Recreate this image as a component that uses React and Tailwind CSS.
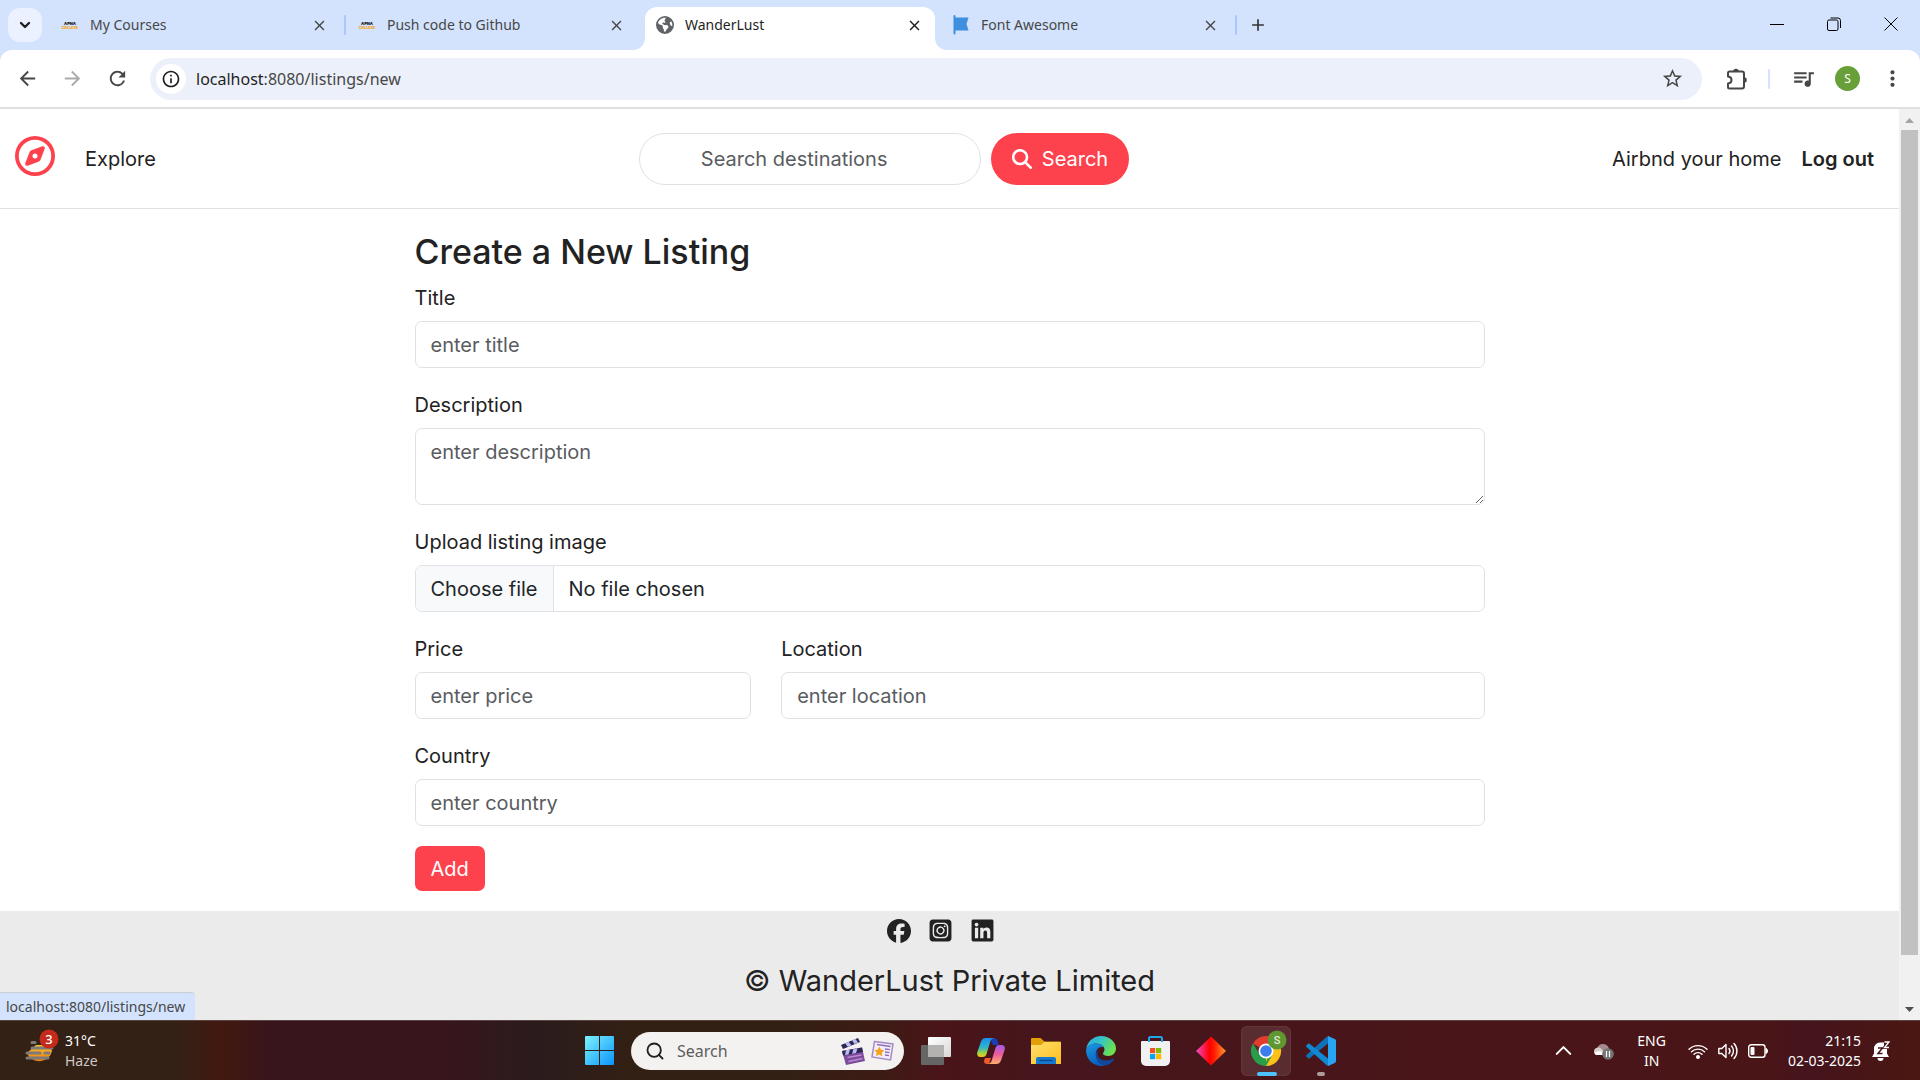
import React from "react";
import {
  FaRegCompass,
  FaMagnifyingGlass,
  FaFacebook,
  FaSquareInstagram,
  FaLinkedin,
  FaEarthAmericas,
} from "react-icons/fa6";
import {
  MdArrowBack,
  MdArrowForward,
  MdRefresh,
  MdInfoOutline,
  MdStarBorder,
  MdQueueMusic,
  MdMoreVert,
  MdClose,
  MdAdd,
} from "react-icons/md";
import { ChevronDown, ChevronUp, Search } from "lucide-react";

const uiFont = "font-['Noto_Sans',sans-serif]";
const pageFont = "font-['Inter',sans-serif]";

function CollegeIcon() {
  return (
    <svg viewBox="0 0 18 11" className="h-[11px] w-[18px] shrink-0 overflow-visible" aria-hidden="true">
      <text x="9" y="5" textAnchor="middle" fontSize="4" fontWeight="900" fontFamily="Inter" fill="#1b1b1b">
        APNA
      </text>
      <text x="9" y="9.200" textAnchor="middle" fontSize="3.600" fontWeight="900" fontFamily="Inter" fill="#f5a623">
        COLLEGE
      </text>
    </svg>
  );
}

function FlagIcon() {
  return (
    <svg viewBox="0 0 18 20" className="h-5 w-[18px] shrink-0" aria-hidden="true">
      <path d="M2.500 1v17.500" stroke="#3f8fdf" strokeWidth="2" strokeLinecap="round" />
      <path d="M2 2.500h14.500L14.500 9l2 6.500H2z" fill="#3f8fdf" />
    </svg>
  );
}

function ExtensionIcon() {
  return (
    <svg viewBox="0 0 22 24" className="h-6 w-[22px]" aria-hidden="true">
      <path
        d="M3.500 4.500h12.500a2 2 0 0 1 2 2v13a2 2 0 0 1-2 2H3.500a1.500 1.500 0 0 1-1.500-1.500v-3.500c2.200-.2 3.500-1.600 3.500-3.500S4.200 9.700 2 9.500V6a1.500 1.500 0 0 1 1.500-1.500z"
        fill="none"
        stroke="currentColor"
        strokeWidth="2"
        strokeLinejoin="round"
      />
      <path d="M7.200 4.500a2.800 2.800 0 0 1 5.600 0zM18 10.200a2.800 2.800 0 0 1 0 5.600z" fill="currentColor" />
    </svg>
  );
}

function Tab({ icon, title, active, separator }) {
  if (active) {
    return (
      <div className="w-[297px] min-w-0 pl-0.5 pr-[5px] pt-[7px]">
        <div className="relative flex h-[43px] items-center rounded-t-xl bg-white pb-[7px] pl-[11px] pr-3 before:absolute before:bottom-0 before:-left-3 before:size-3 before:rounded-br-xl before:shadow-[6px_6px_0_6px_white] after:absolute after:-right-3 after:bottom-0 after:size-3 after:rounded-bl-xl after:shadow-[-6px_6px_0_6px_white]">
          {icon}
          <span className="ml-[11px] flex-1 truncate text-sm text-[#1f1f1f]">{title}</span>
          <button aria-label={"Close " + title} className="text-[#1f1f1f]">
            <MdClose size={17} />
          </button>
        </div>
      </div>
    );
  }
  return (
    <div className="flex w-[297px] min-w-0 items-center pl-3">
      {icon}
      <span className="ml-[11px] flex-1 truncate text-sm text-[#474747]">{title}</span>
      <button aria-label={"Close " + title} className="text-[#474747]">
        <MdClose size={17} />
      </button>
      <span className={separator ? "ml-4 h-5 w-0.5 rounded bg-[#a8c7fa]" : "ml-4 h-5 w-0.5"} />
    </div>
  );
}

function TabStrip() {
  return (
    <header className="flex h-[50px] bg-[#d3e3fd]">
      <button
        aria-label="Search tabs"
        className="ml-2 mr-[7px] mt-2 flex size-[34px] shrink-0 items-center justify-center rounded-xl bg-[#ebf1fe] text-[#1f1f1f]"
      >
        <ChevronDown size={16} strokeWidth={3.5} />
      </button>
      <Tab icon={<CollegeIcon />} title="My Courses" separator />
      <Tab icon={<CollegeIcon />} title="Push code to Github" />
      <Tab icon={<FaEarthAmericas size={18} className="shrink-0 text-[#5f6368]" />} title="WanderLust" active />
      <Tab icon={<FlagIcon />} title="Font Awesome" separator />
      <button aria-label="New tab" className="ml-[11px] self-center text-[#333333]">
        <MdAdd size={20} />
      </button>
      <div className="ml-auto flex items-center gap-[43px] pb-0.5 pr-[22px] text-black">
        <button aria-label="Minimize">
          <svg viewBox="0 0 14 14" className="size-3.5">
            <path d="M0 7.500h14" stroke="currentColor" strokeWidth="1" />
          </svg>
        </button>
        <button aria-label="Restore">
          <svg viewBox="0 0 14 14" className="size-3.5" fill="none" stroke="currentColor">
            <rect x="0.500" y="3" width="10.500" height="10.500" rx="1.500" />
            <path d="M3.500 1h7.500a2.500 2.500 0 0 1 2.500 2.500v7.500" />
          </svg>
        </button>
        <button aria-label="Close window">
          <svg viewBox="0 0 14 14" className="size-3.5" stroke="currentColor">
            <path d="M0.500 0.500l13 13M13.500 0.500l-13 13" />
          </svg>
        </button>
      </div>
    </header>
  );
}

function Toolbar() {
  return (
    <div className="bg-[#d3e3fd]">
      <div className="relative flex h-[59px] items-center rounded-t-xl border-b-2 border-[#e0e0e0] bg-white pl-4 pr-[15px] text-[#474747]">
        <button aria-label="Back">
          <MdArrowBack size={23} />
        </button>
        <button aria-label="Forward" className="ml-[22px] text-[#ababab]">
          <MdArrowForward size={23} />
        </button>
        <button aria-label="Reload" className="ml-[22px]">
          <MdRefresh size={23} />
        </button>
        <div className="ml-[21px] flex h-[42px] flex-1 items-center rounded-full bg-[#ecf0fa] pl-1.5 pr-[18px]">
          <button
            aria-label="Site information"
            className="flex size-[30px] items-center justify-center rounded-full bg-white text-[#1f1f1f]"
          >
            <MdInfoOutline size={20} />
          </button>
          <p className="ml-[10px] flex-1 text-base text-[#474747]">
            <span className="text-[#1f1f1f]">localhost</span>:8080/listings/new
          </p>
          <button aria-label="Bookmark this tab">
            <MdStarBorder size={23} />
          </button>
        </div>
        <button aria-label="Extensions" className="ml-6">
          <ExtensionIcon />
        </button>
        <span className="ml-5 h-5 w-0.5 rounded bg-[#d3e3fd]" />
        <button aria-label="Media controls" className="ml-[21px]">
          <MdQueueMusic size={25} />
        </button>
        <button
          aria-label="Profile"
          className="ml-[19px] flex size-[25px] items-center justify-center rounded-full bg-[#689f38] text-xs text-white"
        >
          S
        </button>
        <button aria-label="Menu" className="ml-5">
          <MdMoreVert size={25} />
        </button>
      </div>
    </div>
  );
}

function Navbar() {
  return (
    <nav className="flex h-[100px] items-center justify-between border-b border-[#dee2e6] pl-[15px] pr-[25px] text-xl text-[#222222]">
      <div className="flex items-center gap-[30px]">
        <a href="#home" aria-label="WanderLust home" className="pb-1.5 text-[#fe424d]">
          <FaRegCompass size={40} />
        </a>
        <a href="#explore">Explore</a>
      </div>
      <form className="flex items-center gap-[10px]" onSubmit={(e) => e.preventDefault()}>
        <input
          type="search"
          aria-label="Search destinations"
          placeholder="Search destinations"
          className="h-[52px] w-[342px] rounded-full border border-[#dee2e6] bg-white pl-[61px] pr-5 placeholder:text-[#595c5f] placeholder:opacity-100"
        />
        <button className="flex h-[52px] items-center gap-[10px] rounded-full bg-[#fe424d] px-[21px] text-white">
          <FaMagnifyingGlass size={20} />
          Search
        </button>
      </form>
      <div className="flex items-center gap-5">
        <a href="#airbnb">Airbnd your home</a>
        <a href="#logout" className="font-semibold">
          Log out
        </a>
      </div>
    </nav>
  );
}

const control =
  "block w-full rounded-[7px] border border-[#dee2e6] bg-white px-[15px] text-xl leading-[30px] text-[#212529] placeholder:text-[#595c5f] placeholder:opacity-100";

function Field({ id, label, className, children }) {
  return (
    <div className={className}>
      <label htmlFor={id} className="mb-2 block pt-0.5 text-xl leading-[30px]">
        {label}
      </label>
      {children}
    </div>
  );
}

function ListingForm() {
  return (
    <main className="mx-auto w-full max-w-[1070px] py-5 text-[#222222]">
      <h1 className="mb-2 pt-0.5 text-[34px] font-medium leading-[42px]">Create a New Listing</h1>
      <form className="flex flex-col gap-5" onSubmit={(e) => e.preventDefault()}>
        <Field id="title" label="Title">
          <input id="title" placeholder="enter title" className={control + " h-[47px]"} />
        </Field>
        <Field id="description" label="Description">
          <textarea id="description" placeholder="enter description" className={control + " h-[77px] py-2"} />
        </Field>
        <Field id="image" label="Upload listing image">
          <input id="image" type="file" className="sr-only" />
          <label
            htmlFor="image"
            className="flex h-[47px] items-stretch overflow-hidden rounded-[7px] border border-[#dee2e6] bg-white text-xl text-[#212529]"
          >
            <span className="flex items-center border-r border-[#dee2e6] bg-[#f8f9fa] px-[15px]">Choose file</span>
            <span className="flex items-center px-[15px]">No file chosen</span>
          </label>
        </Field>
        <div className="grid grid-cols-3 gap-[30px]">
          <Field id="price" label="Price">
            <input id="price" placeholder="enter price" className={control + " h-[47px]"} />
          </Field>
          <Field id="location" label="Location" className="col-span-2">
            <input id="location" placeholder="enter location" className={control + " h-[47px]"} />
          </Field>
        </div>
        <Field id="country" label="Country">
          <input id="country" placeholder="enter country" className={control + " h-[47px]"} />
        </Field>
        <button className="h-[45px] self-start rounded-[7px] bg-[#fe424d] px-4 text-xl text-white">Add</button>
      </form>
    </main>
  );
}

function Footer() {
  return (
    <footer className="flex-1 bg-[#ebebeb] pt-[7px] text-[#222222]">
      <div className="flex items-center justify-center gap-[17px] pr-[18px]">
        <a href="#facebook" aria-label="Facebook">
          <FaFacebook size={24} />
        </a>
        <a href="#instagram" aria-label="Instagram">
          <FaSquareInstagram size={25} />
        </a>
        <a href="#linkedin" aria-label="LinkedIn">
          <FaLinkedin size={25} />
        </a>
      </div>
      <p className="mt-4 text-center text-[29px] leading-[44px]">© WanderLust Private Limited</p>
    </footer>
  );
}

function Scrollbar() {
  return (
    <div className="flex w-[21px] shrink-0 flex-col items-center bg-[#f1f1f1]" aria-hidden="true">
      <svg viewBox="0 0 21 21" className="size-[21px]">
        <path d="M6 14h9l-4.500-5z" fill="#a3a3a3" />
      </svg>
      <div className="w-[17px] flex-[825] bg-[#c1c1c1]" />
      <div className="flex-[44]" />
      <svg viewBox="0 0 21 21" className="size-[21px]">
        <path d="M6 8h9l-4.500 5z" fill="#505050" />
      </svg>
    </div>
  );
}

function WeatherIcon() {
  return (
    <svg viewBox="0 -6 36 44" className="h-11 w-9" aria-hidden="true">
      <defs>
        <linearGradient id="sun" x1="0" y1="0" x2="0" y2="1">
          <stop offset="0" stopColor="#f9c22e" />
          <stop offset="1" stopColor="#ee7a12" />
        </linearGradient>
      </defs>
      <path d="M3 18a13 12.500 0 0 0 25 -2l-2-6H12z" fill="url(#sun)" />
      <g stroke="#7d7a78" strokeWidth="3" strokeLinecap="round">
        <path d="M8 7.500h3M8 13h20M3 18h13M21 18h4M3 23h21" />
      </g>
      <circle cx="25" cy="4" r="9.500" fill="#c42b1c" />
      <text x="25" y="8.500" textAnchor="middle" fontSize="13" fontFamily="Noto Sans" fontWeight="500" fill="#fff">
        3
      </text>
    </svg>
  );
}

function WindowsLogo() {
  return (
    <svg viewBox="0 0 29 29" className="size-[29px]">
      <defs>
        <linearGradient id="win" x1="0" y1="0" x2="1" y2="1">
          <stop offset="0" stopColor="#7df3fd" />
          <stop offset="1" stopColor="#0a94fb" />
        </linearGradient>
      </defs>
      <path d="M1 0h13v14H0V1a1 1 0 0 1 1-1zM15 0h13a1 1 0 0 1 1 1v13H15zM0 15h14v14H1a1 1 0 0 1-1-1zM15 15h14v13a1 1 0 0 1-1 1H15z" fill="url(#win)" />
    </svg>
  );
}

function ClapperIcon() {
  return (
    <svg viewBox="0 0 26 28" className="h-7 w-[26px]" aria-hidden="true">
      <path d="M1 8L18 1l2 4L3 12z" fill="#2e2754" />
      <path d="M5 6.300l3.500-1.500 3 3.500L8 10zM12 3.500l3.500-1.400L18 5.600l-3.500 1.500z" fill="#b9bdf3" />
      <path d="M2 14l20-3.500L25 24 6 28z" fill="#7e4a9c" />
      <path d="M2 14l20-3.500 1 4.500-20 3.500z" fill="#2e2754" />
      <path d="M6 13.300l4-.7-1.500 4.800-3.500.6zM13.500 12l4-.7-1.500 4.800-4 .7z" fill="#b9bdf3" />
      <path d="M7.500 20.500l14-2.500M8.500 24.500l14-3" stroke="#b98bd0" strokeWidth="1.300" />
    </svg>
  );
}

function NewsIcon() {
  return (
    <svg viewBox="0 0 24 22" className="h-[22px] w-6" aria-hidden="true">
      <path d="M3.500 1.500l18.500 2.500-2.500 16L1 17z" fill="#f3ecfb" stroke="#a58bc6" strokeWidth="1.500" />
      <path d="M6 4.500l13.500 2M14 9l5 .7M14 12l4.500.7M14 15l4 .6" stroke="#8d6fb5" strokeWidth="1.300" />
      <path d="M8.500 6.500l1.400 3.200 3.500.5-2.600 2.400.5 3.600-3.200-1.700-3.200 1.500.8-3.500-2.300-2.600 3.400-.2z" fill="#f6a313" />
    </svg>
  );
}

function TaskViewIcon() {
  return (
    <svg viewBox="0 0 30 28" className="h-7 w-[30px]">
      <defs>
        <linearGradient id="tvw" x1="0" y1="0" x2="1" y2="1">
          <stop offset="0" stopColor="#ffffff" />
          <stop offset="1" stopColor="#d8d8d8" />
        </linearGradient>
      </defs>
      <rect x="0" y="8" width="23" height="20" rx="1" fill="#666666" />
      <rect x="7" y="0" width="23" height="20" rx="1" fill="url(#tvw)" />
      <rect x="7" y="8" width="16" height="12" fill="#b4b1b1" />
    </svg>
  );
}

function CopilotIcon() {
  return (
    <svg viewBox="0 0 28 26" className="h-[26px] w-7">
      <defs>
        <linearGradient id="cpa" x1="0" y1="0" x2="0" y2="1">
          <stop offset="0" stopColor="#1d8df0" />
          <stop offset="0.500" stopColor="#2fb6c6" />
          <stop offset="0.800" stopColor="#a5d33c" />
          <stop offset="1" stopColor="#f3c716" />
        </linearGradient>
        <linearGradient id="cpb" x1="0" y1="0" x2="0" y2="1">
          <stop offset="0" stopColor="#a259f0" />
          <stop offset="0.500" stopColor="#ee5e9b" />
          <stop offset="1" stopColor="#fdae6b" />
        </linearGradient>
      </defs>
      <path d="M13 0h4a4 4 0 0 1 3.600 3l1.200 4H16z" fill="#1b3fb4" />
      <path d="M8 20h6l-2 6H10a3 3 0 0 1-3-3z" fill="#ee5a2c" />
      <path d="M8.500 0H17a4 4 0 0 0-3.500 3L9.500 16a4 4 0 0 1-4 3H3.500C.5 19-.3 16.500.4 14L4 3.500C5 1 6.500 0 8.500 0z" fill="url(#cpa)" />
      <path d="M19.500 26H11a4 4 0 0 0 3.500-3l4-13a4 4 0 0 1 4-3h2c3 0 3.800 2.500 3.100 5L24 22.500c-1 2.500-2.500 3.500-4.500 3.500z" fill="url(#cpb)" />
    </svg>
  );
}

function FolderIcon() {
  return (
    <svg viewBox="0 0 30 26" className="h-[26px] w-[30px]">
      <defs>
        <linearGradient id="fld" x1="0" y1="0" x2="1" y2="1">
          <stop offset="0" stopColor="#ffdf6e" />
          <stop offset="1" stopColor="#fbbf1d" />
        </linearGradient>
      </defs>
      <path d="M0 1a1 1 0 0 1 1-1h8.500l4 3.500H29a1 1 0 0 1 1 1V10H0z" fill="#e3a008" />
      <path d="M0 7h10l3.500-3H30v22H0z" fill="url(#fld)" />
      <path d="M5 26v-5a2 2 0 0 1 2-2h16a2 2 0 0 1 2 2v5z" fill="#1479cf" />
      <path d="M9 22.500h12" stroke="#0a4c90" strokeWidth="1.500" strokeLinecap="round" />
    </svg>
  );
}

function EdgeIcon() {
  return (
    <svg viewBox="0 0 30 30" className="size-[30px]">
      <defs>
        <linearGradient id="ega" x1="0" y1="0" x2="1" y2="0.400">
          <stop offset="0" stopColor="#2aa8e6" />
          <stop offset="0.500" stopColor="#35c3c8" />
          <stop offset="1" stopColor="#6be04f" />
        </linearGradient>
        <linearGradient id="egb" x1="0" y1="0" x2="0.500" y2="1">
          <stop offset="0" stopColor="#1a9be6" />
          <stop offset="1" stopColor="#0a5cb8" />
        </linearGradient>
      </defs>
      <path d="M.3 13C1.200 5.500 7.500 0 15 0c8.500 0 15 6 15 12.500 0 4.500-3.500 7.500-7.500 7.500-3.500 0-5.500-1.200-5.500-2.500 0-1 1.500-1.500 1.500-4 0-3-3.500-6-8.500-6C5.500 7.500 2 10 .3 13z" fill="url(#ega)" />
      <path d="M.3 13C2 10 5.500 7.500 10 7.500c4.500 0 7 2 7.800 4-4-1.500-8 1.500-8 6.500 0 6 4.500 11 9.500 11.300-1.300.5-2.800.7-4.300.7A15 15 0 0 1 .3 13z" fill="url(#egb)" />
      <path d="M12.500 14c-3 5 .5 10.500 7.500 10.500 3.500 0 6-1.200 7.500-2 .5-.3 1 .2.7.7C26 26.500 22.500 29.500 19 29.300 13.500 29 9.800 24 9.800 18.500c0-2 1-3.700 2.700-4.500z" fill="#10489c" />
    </svg>
  );
}

function StoreIcon() {
  return (
    <svg viewBox="0 0 29 30" className="h-[30px] w-[29px]">
      <path d="M8 7V2.500A1.500 1.500 0 0 1 9.500 1h10A1.500 1.500 0 0 1 21 2.500V7" fill="none" stroke="#1fa5ea" strokeWidth="2" />
      <path d="M0 6a1 1 0 0 1 1-1h27a1 1 0 0 1 1 1v19a5 5 0 0 1-5 5H5a5 5 0 0 1-5-5z" fill="#f1f1f1" />
      <path d="M8 6V3M21 6V3" stroke="#1fa5ea" strokeWidth="2" />
      <path d="M9 12h5.200v5.200H9z" fill="#f25022" />
      <path d="M15 12h5.200v5.200H15z" fill="#7fba00" />
      <path d="M9 18h5.200v5.200H9z" fill="#00a4ef" />
      <path d="M15 18h5.200v5.200H15z" fill="#ffb900" />
    </svg>
  );
}

function DiamondIcon() {
  return (
    <svg viewBox="0 0 30 30" className="size-[30px]">
      <defs>
        <linearGradient id="dia" x1="0" y1="0" x2="1" y2="0">
          <stop offset="0" stopColor="#f04bc8" />
          <stop offset="0.450" stopColor="#ff0000" />
          <stop offset="0.600" stopColor="#ff1a00" />
          <stop offset="1" stopColor="#ff9a2e" />
        </linearGradient>
      </defs>
      <path d="M15 .5L30 15 15 29.500 0 15z" fill="url(#dia)" />
    </svg>
  );
}

function ChromeIcon() {
  return (
    <svg viewBox="0 0 36 36" className="size-9">
      <path d="M15 21L2 13.500a15 15 0 0 1 26 0z" fill="#e33b2e" />
      <path d="M15 21l13-7.500A15 15 0 0 1 15 36z" fill="#fbc116" />
      <path d="M15 21v15A15 15 0 0 1 2 13.500l6.500 11z" fill="#2a9d48" />
      <path d="M15 36l6.500-11.300L15 21l-6.500 3.700a7.500 7.500 0 0 0 8.500 3.500L12.600 35.800z" fill="#2a9d48" />
      <circle cx="15" cy="21" r="7.500" fill="#ffffff" />
      <circle cx="15" cy="21" r="5.800" fill="#3b7ded" />
      <circle cx="26" cy="10" r="9.500" fill="#5f9732" />
      <text x="26" y="14" textAnchor="middle" fontSize="11" fontFamily="Roboto" fontWeight="500" fill="#dfead6">
        S
      </text>
    </svg>
  );
}

function CodeIcon() {
  return (
    <svg viewBox="0 0 30 30" className="size-[30px]">
      <path d="M22 7.500L3.500 22.200c-.5.400-1 .4-1.500 0L.5 20.800c-.6-.5-.6-1.300 0-1.800L21 .4 22 1z" fill="#0f72b8" />
      <path d="M22 22.500L3.500 7.800c-.5-.4-1-.4-1.500 0L.5 9.200c-.6.500-.6 1.300 0 1.800L21 29.600l1-.6z" fill="#1288d2" />
      <path d="M21 .4c.4-.4 1-.5 1.700-.2l6 2.900c.8.400 1.300 1 1.300 1.900v20c0 .9-.5 1.500-1.300 1.900l-6 2.900c-.7.300-1.300.2-1.700-.2.600.6 1 .2 1-.5V.9c0-.7-.4-1.100-1-.5z" fill="#27a4f2" />
    </svg>
  );
}

function OneDriveIcon() {
  return (
    <svg viewBox="0 0 21 18" className="h-[18px] w-[21px]">
      <path d="M4 9a6 6 0 0 1 12-2v3z" fill="#a58b8d" />
      <path d="M3.500 13a3.800 3.800 0 0 1 .5-7.300c1.800-.5 3.300 0 4.500 1.300L14 13z" fill="#d9cccd" />
      <path d="M3.500 13a2 2 0 0 1-1-3l5-1 6 4z" fill="#ffffff" />
      <circle cx="15" cy="12" r="5.800" fill="#757575" />
      <path d="M13.500 9v6M16.500 9v6" stroke="#ffffff" strokeWidth="1.200" />
    </svg>
  );
}

function WifiIcon() {
  return (
    <svg viewBox="0 0 20 16" className="h-4 w-5" fill="none" stroke="#ffffff" strokeWidth="1.400" strokeLinecap="round">
      <path d="M1 6.200a13 13 0 0 1 18 0M3.500 8.800a9.300 9.300 0 0 1 13 0M6 11.300a5.700 5.700 0 0 1 8 0" />
      <circle cx="10" cy="14" r="1.300" fill="#ffffff" />
    </svg>
  );
}

function VolumeIcon() {
  return (
    <svg viewBox="0 0 20 18" className="h-[18px] w-5" fill="none" stroke="#ffffff" strokeWidth="1.400" strokeLinecap="round" strokeLinejoin="round">
      <path d="M.8 6.500v5h3l4.200 4V2.500l-4.200 4zM11 6.500a4 4 0 0 1 0 5M13.500 4a7.500 7.500 0 0 1 0 10M16 1.500a11 11 0 0 1 0 15" />
    </svg>
  );
}

function BatteryIcon() {
  return (
    <svg viewBox="0 0 20 14" className="h-3.5 w-5">
      <rect x="0.700" y="0.700" width="16.300" height="12.600" rx="2.500" fill="none" stroke="#ffffff" strokeWidth="1.400" />
      <rect x="2.500" y="3" width="4" height="8" rx="1" fill="#ffffff" />
      <path d="M18 4.500c2 .3 2 4.700 0 5z" fill="#ffffff" stroke="#ffffff" />
    </svg>
  );
}

function BellIcon() {
  return (
    <svg viewBox="0 0 18 20" className="h-5 w-[18px]">
      <path d="M0 16l2-3.500V8a6 6 0 0 1 6-6.500h4V7h3v5.500l2 3.500z" fill="#ffffff" />
      <path d="M5.500 17a3 3 0 0 0 6 0z" fill="#ffffff" />
      <path d="M12.500 1.500H17L12.500 6.500H17" fill="none" stroke="#4a1517" strokeWidth="3" />
      <path d="M6 7h4.500L6 12.500h4.500" fill="none" stroke="#4a1517" strokeWidth="1.500" />
      <path d="M12.500 1h4.500l-4.500 5.500H17" fill="none" stroke="#ffffff" strokeWidth="1.300" />
    </svg>
  );
}

function TaskButton({ label, active, children }) {
  return (
    <div className="flex w-[55px] justify-center">
      <button
        aria-label={label}
        className={
          active
            ? "flex size-[50px] items-center justify-center rounded-md border border-white/5 bg-white/10"
            : "flex size-[50px] items-center justify-center"
        }
      >
        {children}
      </button>
    </div>
  );
}

function Taskbar() {
  return (
    <div className="grid h-[60px] grid-cols-[1fr_auto_1fr] items-center border-t border-[#5b4340] bg-[linear-gradient(90deg,#332116_0%,#332116_9%,#42190f_11.500%,#38151d_14%,#38151d_23%,#2b1c1c_28%,#332014_33%,#332014_41%,#3d1b15_46%,#4a1419_49%,#45161c_54%,#48151a_70%,#4a1517_92%,#45141d_94%,#4a1712_100%)] text-sm leading-5 text-white">
      <button className="flex items-center gap-[5px] pl-6 text-left">
        <WeatherIcon />
        <span>
          <span className="block">31°C</span>
          <span className="block text-[#cfc8c4]">Haze</span>
        </span>
      </button>
      <div className="flex items-center">
        <TaskButton label="Start">
          <WindowsLogo />
        </TaskButton>
        <label className="mx-1 flex h-[38px] w-[273px] items-center rounded-full bg-[#f4f2f1] pl-3.5 pr-[9px] text-[#1f1f1f]">
          <Search size={20} strokeWidth={2.2} />
          <input
            type="search"
            aria-label="Search"
            placeholder="Search"
            className="ml-3 w-0 flex-1 bg-transparent text-base placeholder:text-[#5e5c5b] placeholder:opacity-100"
          />
          <span className="flex items-center gap-[5px]">
            <ClapperIcon />
            <NewsIcon />
          </span>
        </label>
        <TaskButton label="Task view">
          <TaskViewIcon />
        </TaskButton>
        <TaskButton label="Copilot">
          <CopilotIcon />
        </TaskButton>
        <TaskButton label="File Explorer">
          <FolderIcon />
        </TaskButton>
        <TaskButton label="Edge">
          <EdgeIcon />
        </TaskButton>
        <TaskButton label="Store">
          <StoreIcon />
        </TaskButton>
        <TaskButton label="Diamond">
          <DiamondIcon />
        </TaskButton>
        <TaskButton label="Chrome" active>
          <span className="relative pb-1.5 pl-1.5">
            <ChromeIcon />
            <span className="absolute -bottom-1 left-3 h-1 w-5 rounded-full bg-[#4cc2ff]" />
          </span>
        </TaskButton>
        <TaskButton label="Visual Studio Code">
          <span className="relative">
            <CodeIcon />
            <span className="absolute -bottom-2.5 left-[11px] h-1 w-2 rounded-full bg-[#b09a9c]" />
          </span>
        </TaskButton>
      </div>
      <div className="flex items-center justify-end pr-[30px]">
        <button aria-label="Show hidden icons">
          <ChevronUp size={27} strokeWidth={1.8} />
        </button>
        <span className="ml-4">
          <OneDriveIcon />
        </span>
        <button className="ml-[23px] text-center">
          <span className="block">ENG</span>
          <span className="block">IN</span>
        </button>
        <button className="ml-[22px] flex items-center gap-2.5" aria-label="Network, volume and battery">
          <WifiIcon />
          <VolumeIcon />
          <BatteryIcon />
        </button>
        <button className="ml-5 text-right">
          <span className="block">21:15</span>
          <span className="block">02-03-2025</span>
        </button>
        <button aria-label="Notifications" className="ml-[11px]">
          <BellIcon />
        </button>
      </div>
    </div>
  );
}

export default function App() {
  return (
    <div className={"flex min-h-screen flex-col bg-white " + uiFont}>
      <TabStrip />
      <Toolbar />
      <div className="relative flex flex-1">
        <div className={"flex min-w-0 flex-1 flex-col " + pageFont}>
          <Navbar />
          <ListingForm />
          <Footer />
        </div>
        <Scrollbar />
        <p className="absolute bottom-0 left-0 h-7 rounded-tr border-t border-[#c9cdd4] bg-[#d3e3fd] pl-1.5 pr-[10px] text-sm leading-7 text-[#474747]">
          localhost:8080/listings/new
        </p>
      </div>
      <Taskbar />
    </div>
  );
}
